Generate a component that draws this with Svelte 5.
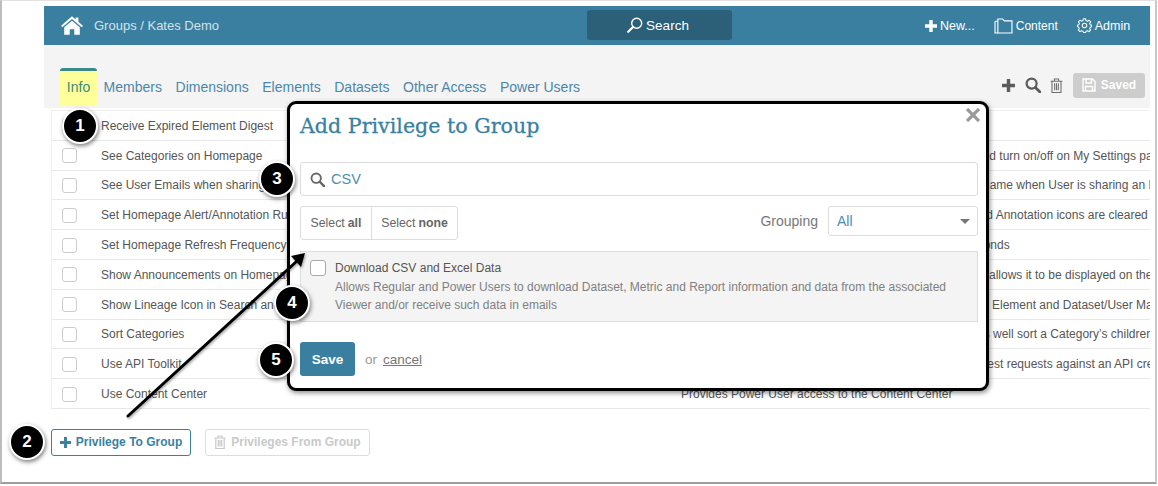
<script>
  const rows = [
    { name: 'Receive Expired Element Digest', check: true },
    { name: 'See Categories on Homepage', desc: 'and turn on/off on My Settings page', left: 295 },
    { name: 'See User Emails when sharing', desc: 'name when User is sharing an Element', left: 302 },
    { name: 'Set Homepage Alert/Annotation Rules', desc: 'and Annotation icons are cleared', left: 292 },
    { name: 'Set Homepage Refresh Frequency', desc: 'seconds', left: 284 },
    { name: 'Show Announcements on Homepage', desc: 'allows it to be displayed on the', left: 308 },
    { name: 'Show Lineage Icon in Search and', desc: 'Element and Dataset/User Map', left: 311 },
    { name: 'Sort Categories', desc: 'as well sort a Category\u2019s children', left: 296 },
    { name: 'Use API Toolkit', desc: 'test requests against an API credential', left: 303 },
    { name: 'Use Content Center', desc: 'Provides Power User access to the Content Center', left: 0 }
  ];
  const tabs = ['Members', 'Dimensions', 'Elements', 'Datasets', 'Other Access', 'Power Users'];
  const callouts = [
    { n: 1, x: 80, y: 126 },
    { n: 2, x: 27, y: 442 },
    { n: 3, x: 277, y: 179 },
    { n: 4, x: 292, y: 303 },
    { n: 5, x: 276, y: 360 }
  ];
</script>

<div class="frame">
  <header class="topbar">
    <svg class="home" viewBox="0 0 24 20" width="22" height="19" fill="#fff">
      <path d="M12 0 L16 3.4 V1.2 H19 V6 L24 10.3 L22.6 11.8 L12 3 L1.4 11.8 L0 10.3 Z" />
      <path d="M12 4.8 L20.5 11.8 V20 H14.5 V14 H9.5 V20 H3.5 V11.8 Z" />
    </svg>
    <span class="crumb">Groups / Kates Demo</span>
    <div class="searchbtn">
      <svg viewBox="0 0 16 16" width="16" height="16" fill="none" stroke="#fff" stroke-width="1.4">
        <circle cx="9.7" cy="6.3" r="5" />
        <path d="M6 10 L1.2 14.8" stroke-width="2.2" stroke-linecap="round" />
      </svg>
      <span>Search</span>
    </div>
    <nav class="topnav">
      <span class="navitem new">
        <svg viewBox="0 0 12 12" width="12" height="12" fill="#fff"><path d="M4.3 0 H7.7 V4.3 H12 V7.7 H7.7 V12 H4.3 V7.7 H0 V4.3 H4.3 Z" /></svg>
        New...
      </span>
      <span class="navitem content">
        <svg viewBox="0 0 20 17" width="19" height="16" fill="none" stroke="#fff" stroke-width="1.2">
          <path d="M4 3 V1 H9 L11 3 H19 V16 H4 Z" />
          <path d="M1 3.5 H4 M1 3.5 V16 H4" />
        </svg>
        Content
      </span>
      <span class="navitem">
        <svg viewBox="0 0 16 16" width="15" height="15" fill="none" stroke="#fff" stroke-width="1.1">
          <circle cx="8" cy="8" r="2.4" />
          <path d="M6.8 .8 H9.2 L9.6 2.7 L11.2 3.4 L12.9 2.4 L14.6 4.1 L13.5 5.7 L14.2 7.3 L15.4 7.6 V9.4 L14.2 9.8 L13.5 11.3 L14.4 12.9 L12.8 14.6 L11.2 13.5 L9.6 14.2 L9.2 15.4 H6.8 L6.4 14.2 L4.8 13.5 L3.1 14.5 L1.5 12.9 L2.5 11.3 L1.8 9.8 L.6 9.4 V7.6 L1.8 7.3 L2.5 5.7 L1.5 4.1 L3.2 2.4 L4.8 3.4 L6.4 2.7 Z" stroke-linejoin="round" />
        </svg>
        Admin
      </span>
    </nav>
  </header>

  <div class="subbar">
    <div class="tabs">
      <span class="tab active">Info</span>
      {#each tabs as t}
        <span class="tab">{t}</span>
      {/each}
    </div>
    <div class="tools">
      <svg viewBox="0 0 13 13" width="13" height="13" fill="#5b5b5b"><path d="M4.8 0 H8.2 V4.8 H13 V8.2 H8.2 V13 H4.8 V8.2 H0 V4.8 H4.8 Z" /></svg>
      <svg viewBox="0 0 16 16" width="16" height="16" fill="none" stroke="#5b5b5b" stroke-width="2.2">
        <circle cx="6.6" cy="6.6" r="5" />
        <path d="M10.4 10.4 L15 15" stroke-width="2.8" stroke-linecap="round" />
      </svg>
      <svg class="trash" viewBox="0 0 12 14" width="13" height="15" fill="none" stroke="#6d6d6d" stroke-width="1">
        <path d="M.5 3 H11.5 M4 3 V1 H8 V3 M1.8 3 V13.5 H10.2 V3 M4.3 5 V11.5 M6 5 V11.5 M7.7 5 V11.5" />
      </svg>
      <span class="saved">
        <svg viewBox="0 0 14 14" width="14" height="14" fill="none" stroke="#fff" stroke-width="1.4">
          <path d="M1 1 H10.5 L13 3.5 V13 H1 Z M4 1 V5 H9.5 V1 M3.5 13 V8.5 H10.5 V13" />
        </svg>
        Saved
      </span>
    </div>
  </div>

  <div class="table">
    {#each rows as r}
      <div class="row">
        <span class="cell-check"><span class="box"></span></span>
        <span class="name">{r.name}</span>
        {#if r.desc}
          <span class="desc" style="padding-left:{r.left}px">{r.desc}</span>
        {/if}
      </div>
    {/each}
  </div>

  <div class="actions">
    <button class="btn primary">
      <svg viewBox="0 0 12 12" width="11" height="11" fill="#3a7fa0"><path d="M4.4 0 H7.6 V4.4 H12 V7.6 H7.6 V12 H4.4 V7.6 H0 V4.4 H4.4 Z" /></svg>
      Privilege To Group
    </button>
    <button class="btn disabled">
      <svg viewBox="0 0 12 14" width="12" height="14" fill="none" stroke="#c9c9c9" stroke-width="1.2">
        <path d="M.5 3 H11.5 M4 3 V1 H8 V3 M1.8 3 V13.5 H10.2 V3 M4.3 5 V11.5 M6 5 V11.5 M7.7 5 V11.5" />
      </svg>
      Privileges From Group
    </button>
  </div>
</div>

<section class="modal">
  <svg class="close" viewBox="0 0 14 14" width="14" height="14" stroke="#9a9a9a" stroke-width="3.2"><path d="M1 1 L13 13 M13 1 L1 13" /></svg>
  <h2>Add Privilege to Group</h2>
  <div class="search">
    <svg viewBox="0 0 16 16" width="15" height="15" fill="none" stroke="#666" stroke-width="2">
      <circle cx="6.6" cy="6.6" r="5" />
      <path d="M10.4 10.4 L15 15" stroke-width="2.6" stroke-linecap="round" />
    </svg>
    <span>CSV</span>
  </div>
  <div class="controls">
    <div class="group">
      <span>Select <b>all</b></span>
      <span>Select <b>none</b></span>
    </div>
    <label class="grouping" for="grouping-select">Grouping</label>
    <div class="select" id="grouping-select"><span>All</span><i></i></div>
  </div>
  <div class="priv">
    <span class="box big"></span>
    <div class="privtext">
      <div class="privname">Download CSV and Excel Data</div>
      <div class="privdesc">Allows Regular and Power Users to download Dataset, Metric and Report information and data from the associated<br />Viewer and/or receive such data in emails</div>
    </div>
  </div>
  <div class="footer">
    <span class="save">Save</span>
    <span class="or">or</span>
    <span class="cancel">cancel</span>
  </div>
</section>

<svg class="arrow" viewBox="0 0 1158 486" width="1158" height="486">
  <defs>
    <filter id="arrow-shadow" x="-20%" y="-20%" width="140%" height="140%">
      <feDropShadow dx="1" dy="1.5" stdDeviation="1.2" flood-color="#000" flood-opacity="0.35" />
    </filter>
  </defs>
  <g filter="url(#arrow-shadow)">
    <path d="M128 416 L297 261" stroke="#000" stroke-width="3" stroke-linecap="round" fill="none" />
    <path d="M305 253 L301 267 L291 256 Z" fill="#000" />
  </g>
</svg>

{#each callouts as c}
  <div class="callout" style="left:{c.x - 18}px;top:{c.y - 18}px">{c.n}</div>
{/each}

<style>
  :global(body) {
    margin: 0;
    background: #fff;
    font-family: "Liberation Sans", Arial, sans-serif;
  }
  .frame {
    box-sizing: border-box;
    width: 1157px;
    height: 484px;
    padding: 5px 5px 0 42px;
    border: 1px solid #e2e2e2;
    border-left: 2px solid #bdbdbd;
    border-right: 2px solid #c8c8c8;
    border-bottom: 2px solid #9e9e9e;
    overflow: hidden;
  }
  .topbar {
    display: flex;
    align-items: center;
    height: 39px;
    background: #3a7fa0;
    color: #fff;
    font-size: 13px;
  }
  .home { margin-left: 17px; }
  .crumb { margin-left: 11px; color: #d3e3ea; width: 124px; white-space: nowrap; font-size: 13px; }
  .searchbtn {
    display: flex;
    align-items: center;
    justify-content: center;
    gap: 3px;
    width: 145px;
    height: 30px;
    margin-left: 369px;
    margin-bottom: 1px;
    padding-right: 3px;
    box-sizing: border-box;
    background: #2c6079;
    border-radius: 3px;
    font-size: 13.5px;
  }
  .topnav { display: flex; align-items: center; margin-left: 193px; gap: 19px; font-size: 12.5px; }
  .navitem { display: flex; align-items: center; gap: 3px; white-space: nowrap; }
  .navitem.content { font-size: 12px; }
  .subbar {
    display: flex;
    justify-content: space-between;
    height: 63px;
    background: #f4f4f4;
  }
  .tabs {
    display: flex;
    align-items: flex-end;
    margin-left: 16px;
    gap: 13.6px;
    height: 61px;
  }
  .tab { color: #4b87ab; font-size: 14px; line-height: 20px; padding-bottom: 9px; white-space: nowrap; }
  .tab.active {
    box-sizing: border-box;
    width: 37px;
    height: 38px;
    margin-right: -7px;
    padding: 6px 0 0;
    text-align: center;
    background: #ffff99;
    border-top: 3px solid #3a8a8c;
    border-radius: 3px 3px 0 0;
    color: #3c8a7c;
  }
  .tools {
    display: flex;
    align-items: center;
    height: 24px;
    margin: 28px 5px 0 0;
    gap: 10px;
  }
  .trash { margin-left: -1px; }
  .saved {
    display: flex;
    align-items: center;
    justify-content: center;
    gap: 5px;
    box-sizing: border-box;
    width: 72px;
    height: 25px;
    background: #cdcdcd;
    border-radius: 3px;
    color: #fff;
    font-size: 12px;
    font-weight: bold;
  }
  .table {
    margin: 2px 0 0 7px;
    border-left: 1px solid #efefef;
    border-top: 1px solid #efefef;
  }
  .row {
    display: flex;
    align-items: center;
    box-sizing: border-box;
    height: 29.8px;
    padding-top: 1px;
    border-bottom: 1px solid #e8e8e8;
    color: #555;
    font-size: 12px;
    white-space: nowrap;
    overflow: hidden;
  }
  .cell-check { flex: none; width: 49px; padding-left: 10px; box-sizing: border-box; display: flex; }
  .box {
    display: block;
    box-sizing: border-box;
    width: 15px;
    height: 15px;
    background: #fff;
    border: 1px solid #ccc;
    border-radius: 3px;
  }
  .name { width: 580px; flex: none; }
  .desc { flex: none; }
  .actions { display: flex; gap: 14px; margin: 20px 0 0 7px; }
  .btn {
    display: flex;
    align-items: center;
    justify-content: center;
    gap: 5px;
    height: 27px;
    padding: 0;
    background: #fff;
    border-radius: 3px;
    font-family: inherit;
    font-size: 12px;
    font-weight: bold;
  }
  .primary { width: 140px; border: 1px solid #3a7fa0; color: #3a7fa0; }
  .disabled { width: 165px; border: 1px solid #ddd; color: #c9c9c9; }

  .modal {
    position: absolute;
    left: 287px;
    top: 101px;
    box-sizing: border-box;
    width: 702px;
    height: 290px;
    padding: 0 8px 0 10px;
    background: #fff;
    border: 3px solid #000;
    border-radius: 9px;
    box-shadow: 1px 2px 5px rgba(0, 0, 0, 0.45);
  }
  .close { position: absolute; right: 6px; top: 4px; }
  h2 {
    margin: 7px 0 0;
    height: 37px;
    line-height: 30px;
    color: #3a7fa0;
    font-family: "DejaVu Serif", serif;
    font-size: 20.6px;
    font-weight: normal;
    -webkit-text-stroke: 0.3px #3a7fa0;
    white-space: nowrap;
  }
  .search {
    display: flex;
    align-items: center;
    gap: 6px;
    box-sizing: border-box;
    height: 34px;
    margin-top: 14px;
    padding-left: 9px;
    border: 1px solid #ddd;
    border-radius: 3px;
    color: #4a8fb0;
    font-size: 14.5px;
  }
  .controls { display: flex; align-items: flex-start; margin-top: 10px; height: 45px; }
  .group { display: flex; height: 34px; border: 1px solid #ddd; border-radius: 3px; box-sizing: border-box; color: #666; font-size: 12.3px; }
  .group span { display: flex; align-items: center; justify-content: center; gap: 3px; width: 70px; }
  .group span + span { border-left: 1px solid #ddd; width: 85px; }
  .group b { font-weight: bold; }
  .grouping { margin: 0 10px 0 auto; line-height: 30px; color: #777; font-size: 14px; }
  .select {
    display: flex;
    align-items: center;
    justify-content: space-between;
    box-sizing: border-box;
    width: 150px;
    height: 30px;
    padding: 0 7px 0 8px;
    border: 1px solid #ddd;
    border-radius: 3px;
    color: #4a8fb0;
    font-size: 14px;
  }
  .select i { width: 0; height: 0; border: 5px solid transparent; border-top: 5px solid #777; border-bottom: 0; }
  .priv {
    display: flex;
    box-sizing: border-box;
    height: 71px;
    padding: 8px 9px;
    background: #f4f4f4;
    border: 1px solid #ddd;
    gap: 9px;
  }
  .box.big { width: 16px; height: 16px; flex: none; border-color: #aaa; }
  .privname { color: #555; font-size: 12px; line-height: 17px; }
  .privdesc { margin-top: 1px; color: #808080; font-size: 12px; line-height: 18px; white-space: nowrap; }
  .footer { display: flex; align-items: center; margin-top: 20px; }
  .save {
    display: flex;
    align-items: center;
    justify-content: center;
    width: 55px;
    height: 34px;
    background: #3a7fa0;
    border-radius: 3px;
    color: #fff;
    font-size: 13.5px;
    font-weight: bold;
  }
  .or { margin-left: 10px; color: #999; font-size: 13.5px; }
  .cancel { margin-left: 6px; color: #777; font-size: 13.5px; text-decoration: underline; }
  .arrow { position: absolute; left: 0; top: 0; pointer-events: none; }
  .callout {
    position: absolute;
    display: flex;
    align-items: center;
    justify-content: center;
    box-sizing: border-box;
    width: 36px;
    height: 36px;
    background: #000;
    border: 2px solid #fff;
    border-radius: 50%;
    box-shadow: 1px 2px 4px rgba(0, 0, 0, 0.5);
    color: #fff;
    font-size: 17px;
    font-weight: bold;
  }
</style>
